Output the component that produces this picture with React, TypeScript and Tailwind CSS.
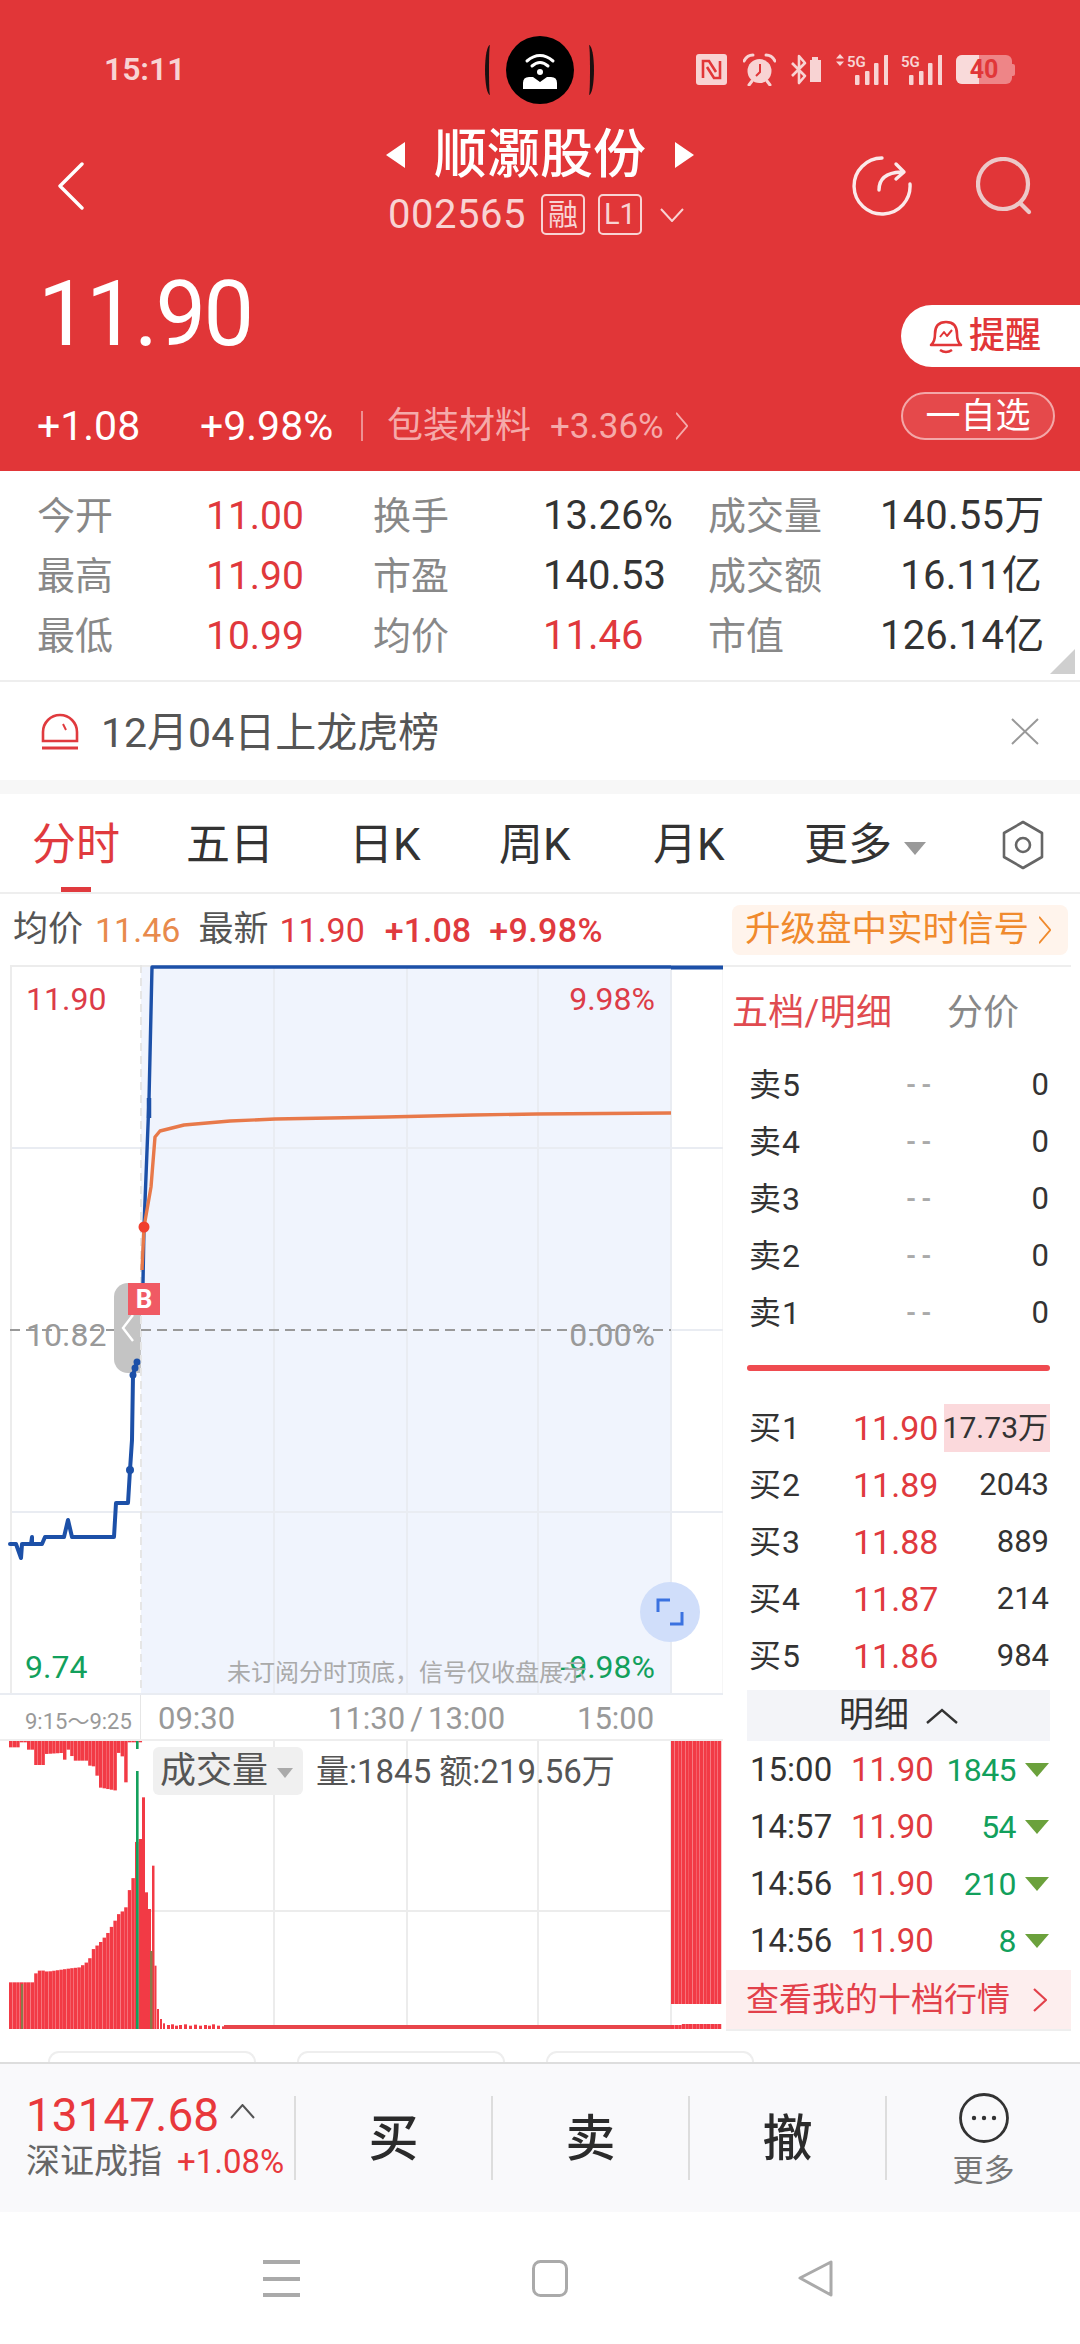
import React from "react";

function Chev({ className, d = "M4 1 L1 6 L4 11" }: { className?: string; d?: string }) {
  return (
    <svg viewBox="0 0 12 12" className={className} fill="none" stroke="currentColor" strokeWidth="1" strokeLinecap="round" strokeLinejoin="round" preserveAspectRatio="none">
      <path d={d} />
    </svg>
  );
}

function Signal({ label, arrow, xs, heights }: { label: string; arrow?: boolean; xs: number[]; heights: number[] }) {
  const w = xs[xs.length - 1] + 4;
  return (
    <svg width={w} height="32" viewBox={`0 0 ${w} 32`} fill="#f8d3d3">
      {arrow && <path d="M4 0 L8 4.5 H0 Z M4 12 L8 7.5 H0 Z" />}
      <text x={arrow ? 11 : 0} y="13" fontSize="15" fontWeight="600" fontFamily="Roboto">{label}</text>
      {xs.map((x, i) => (
        <rect key={i} x={x} y={31 - heights[i]} width="4.5" height={heights[i]} rx="1" />
      ))}
    </svg>
  );
}

function StatusIcons() {
  return (
    <div className="flex items-center w-[319px] mt-[17px]">
      <svg width="31" height="31" viewBox="0 0 31 31" className="mr-[16px]">
        <rect width="31" height="31" rx="3" fill="#f8d3d3" />
        <path d="M7 24 V7 H13 L20 18 M24 7 V24 H18 L11 13" fill="none" stroke="#e13638" strokeWidth="2.6" />
      </svg>
      <svg width="33" height="33" viewBox="0 0 33 33" className="mr-[14px]">
        <circle cx="16.5" cy="18" r="12" fill="#f8d3d3" />
        <path d="M1 8 Q4 2 10 2 M32 8 Q29 2 23 2" fill="none" stroke="#f8d3d3" strokeWidth="3" strokeLinecap="round" />
        <path d="M6 32 L9 28 M27 32 L24 28" stroke="#f8d3d3" strokeWidth="3" strokeLinecap="round" />
        <path d="M17 11 V19 L13 23" fill="none" stroke="#e13638" strokeWidth="2" />
      </svg>
      <svg width="32" height="32" viewBox="0 0 32 32" className="mr-[14px]">
        <path d="M2 9 L15 22 L9 29 V2 L15 9 L2 22" fill="none" stroke="#f8d3d3" strokeWidth="2.6" strokeLinejoin="round" />
        <path d="M20 6 H22 V3 H28 V6 H31 V28 H20 Z" fill="#f8d3d3" />
      </svg>
      <div className="mr-[13px] h-[32px]">
        <Signal label="5G" arrow xs={[19, 29, 38, 48]} heights={[10, 14, 22, 30]} />
      </div>
      <div className="mr-[14px] h-[32px]">
        <Signal label="5G" xs={[8, 18, 27, 37]} heights={[10, 14, 22, 30]} />
      </div>
      <div className="relative w-[56px] h-[29px] rounded-[6px] bg-[#ee8587] flex items-center justify-center">
        <div className="absolute left-0 top-0 bottom-0 w-[23px] bg-[#f9dada] rounded-l-[6px]" />
        <span className="relative text-[#e13638] text-[25px] font-bold leading-none">40</span>
      </div>
      <div className="w-[3px] h-[12px] bg-[#ee8587] rounded-r-[2px]" />
    </div>
  );
}

function Header() {
  return (
    <div className="h-[471px] bg-[#e13638] text-white flex flex-col shrink-0">
      <div className="h-[116px] flex items-start pt-[36px] shrink-0">
        <div className="w-[485px] pl-[104px] pt-[15px] text-[32px] leading-[36px] font-semibold text-[#f8d3d3] tracking-[-0.1px]">15:11</div>
        <div className="w-[109px] h-[68px] flex items-center justify-between">
          <div className="w-[10px] h-[50px] border-l-[4px] border-[#1a1010] rounded-l-[50%]" />
          <div className="w-[68px] h-[68px] rounded-full bg-black flex items-center justify-center">
            <svg width="44" height="44" viewBox="0 0 44 44" fill="none">
              <path d="M9 13 Q22 2 35 13 M14 18 Q22 11 30 18" stroke="#fff" strokeWidth="3" strokeLinecap="round" />
              <circle cx="22" cy="24" r="3" fill="#fff" />
              <path d="M5 41 V35 Q5 29 11 29 H15 L22 34 L29 29 H33 Q39 29 39 35 V41 Z" fill="#fff" />
            </svg>
          </div>
          <div className="w-[10px] h-[50px] border-r-[4px] border-[#1a1010] rounded-r-[50%]" />
        </div>
        <div className="pl-[102px] flex">
          <StatusIcons />
        </div>
      </div>

      <div className="h-[140px] flex items-center shrink-0">
        <div className="w-[300px] pl-[57px]">
          <svg width="28" height="48" viewBox="0 0 28 48" fill="none" stroke="#fff" strokeWidth="3.4" strokeLinecap="round" strokeLinejoin="round">
            <path d="M25 2 L3 24 L25 46" />
          </svg>
        </div>
        <div className="w-[480px] flex flex-col items-center -translate-y-[5px]">
          <div className="flex items-center h-[62px]">
            <div className="w-0 h-0 border-y-[13px] border-y-transparent border-r-[19px] border-r-white" />
            <div className="mx-[29px] text-[53px] leading-[62px] font-medium">顺灏股份</div>
            <div className="w-0 h-0 border-y-[13px] border-y-transparent border-l-[19px] border-l-white" />
          </div>
          <div className="flex items-center h-[48px] mt-[5px] text-[#f8d3d3] -translate-x-[4px]">
            <span className="text-[40px] leading-none tracking-[0.5px]">002565</span>
            <span className="ml-[15px] w-[44px] h-[41px] border-[2px] border-[#f8d3d3] rounded-[5px] flex items-center justify-center text-[30px] leading-none">融</span>
            <span className="ml-[13px] w-[44px] h-[41px] border-[2px] border-[#f8d3d3] rounded-[5px] flex items-center justify-center text-[29px] leading-none">L1</span>
            <svg width="24" height="14" viewBox="0 0 24 14" fill="none" stroke="#f8d3d3" strokeWidth="2" className="ml-[18px]">
              <path d="M1 1 L12 13 L23 1" />
            </svg>
          </div>
        </div>
        <div className="w-[300px] flex items-center pl-[72px]">
          <svg width="60" height="60" viewBox="0 0 60 60" fill="none" stroke="#fbeaea" strokeWidth="3.4" strokeLinecap="round" strokeLinejoin="round">
            <path d="M30 2 A28 28 0 1 0 58 28" />
            <path d="M27 34 Q27 17 49 16 M44 8 L52 16 L44 23" />
          </svg>
          <svg width="56" height="58" viewBox="0 0 56 58" fill="none" stroke="#ecc8c8" strokeWidth="4.2" strokeLinecap="round" className="ml-[64px]">
            <circle cx="27" cy="27" r="25" />
            <path d="M44 46 L53 55" />
          </svg>
        </div>
      </div>

      <div className="flex-1 flex justify-between">
        <div className="flex flex-col pl-[37px]">
          <div className="text-[90px] leading-[80px] mt-[19px] pl-[1px] tracking-[-2.5px]">11.90</div>
          <div className="flex items-center mt-[51px] h-[40px] text-[41px] leading-none">
            <span className="w-[163px]">+1.08</span>
            <span className="w-[161px]">+9.98%</span>
            <span className="w-[2px] h-[30px] bg-[#ee9092]" />
            <span className="ml-[24px] text-[#f5aaaa] text-[36px]">包装材料</span>
            <span className="ml-[19px] text-[#f5aaaa] text-[35px]">+3.36%</span>
            <Chev className="ml-[10px] w-[16px] h-[30px] text-[#f5aaaa]" d="M2 1 L10 6 L2 11" />
          </div>
        </div>
        <div className="flex flex-col items-end pt-[49px]">
          <div className="w-[179px] h-[62px] bg-white rounded-l-[31px] flex items-center pl-[27px] text-[#e13638] text-[36px]">
            <svg width="36" height="36" viewBox="0 0 36 36" fill="none" stroke="#e13638" strokeWidth="2.6" strokeLinejoin="round">
              <path d="M3 27 Q7 24 7 16 Q7 4 18 4 Q29 4 29 16 Q29 24 33 27 Z" />
              <path d="M12 32 Q18 36 24 32" />
              <path d="M12 19 L16 14 L19 18 L24 12" strokeWidth="2" />
            </svg>
            <span className="ml-[5px] leading-none font-medium">提醒</span>
          </div>
          <div className="w-[154px] h-[48px] mr-[25px] mt-[25px] rounded-[24px] border-[2px] border-[#f3a7a8] bg-[#e5494b] flex items-center justify-center text-[35px] leading-none">
            一自选
          </div>
        </div>
      </div>
    </div>
  );
}

const stats = [
  ["今开", "11.00", "换手", "13.26%", "成交量", "140.55万"],
  ["最高", "11.90", "市盈", "140.53", "成交额", "16.11亿"],
  ["最低", "10.99", "均价", "11.46", "市值", "126.14亿"],
];

function Stats() {
  return (
    <div className="relative h-[211px] shrink-0 border-b-[2px] border-[#eeeeee] pt-[15px] text-[38px] leading-[60px]">
      {stats.map((r, i) => (
        <div key={i} className="grid grid-cols-[206px_167px_170px_165px_172px_162px] h-[60px]">
          <span className="pl-[37px] text-[#888888]">{r[0]}</span>
          <span className="text-[#e0383c] text-[39px]">{r[1]}</span>
          <span className="text-[#888888]">{r[2]}</span>
          <span className={"text-[40px] " + (i === 2 ? "text-[#e0383c]" : "text-[#333333]")}>{r[3]}</span>
          <span className="text-[#888888]">{r[4]}</span>
          <span className="text-right text-[#333333] text-[40px] tracking-[0.2px] whitespace-nowrap">{r[5]}</span>
        </div>
      ))}
      <div className="absolute right-[5px] bottom-[6px] w-[25px] h-[25px] bg-[#cfcfcf] [clip-path:polygon(100%_0,100%_100%,0_100%)]" />
    </div>
  );
}

function AlertRow() {
  return (
    <div className="h-[98px] flex items-center shrink-0">
      <svg width="38" height="38" viewBox="0 0 38 38" fill="none" stroke="#e03a3e" strokeWidth="2.6" className="ml-[41px]">
        <path d="M2 29 V20 A17 17 0 0 1 36 20 V29 Z" />
        <path d="M22 12 L25 18" strokeWidth="2" />
        <path d="M1 36 H37" strokeWidth="3" />
      </svg>
      <span className="ml-[22px] mt-[4px] text-[41px] leading-none text-[#555555]">12月04日上龙虎榜</span>
      <svg width="28" height="27" viewBox="0 0 28 27" fill="none" stroke="#999" strokeWidth="2" className="ml-auto mr-[41px]">
        <path d="M1 1 L27 26 M27 1 L1 26" />
      </svg>
    </div>
  );
}

function Tabs() {
  return (
    <div className="relative h-[100px] shrink-0 border-b-[2px] border-[#eeeeee] bg-white flex items-center pt-[4px] text-[44px] leading-none text-[#333333]">
      <span className="ml-[32px] w-[154px] text-[#e03a3e]">分时</span>
      <span className="w-[163px]">五日</span>
      <span className="w-[150px]">日K</span>
      <span className="w-[154px]">周K</span>
      <span className="w-[151px]">月K</span>
      <span>更多</span>
      <div className="ml-[12px] mt-[6px] w-0 h-0 border-x-[11px] border-x-transparent border-t-[13px] border-t-[#999999]" />
      <svg width="44" height="50" viewBox="0 0 44 50" fill="none" stroke="#666" strokeWidth="2.6" strokeLinejoin="round" className="ml-[75px]">
        <path d="M22 2 L41 13 V37 L22 48 L3 37 V13 Z" />
        <circle cx="22" cy="25" r="7" />
      </svg>
      <div className="absolute left-[61px] bottom-0 w-[30px] h-[5px] bg-[#e03a3e]" />
    </div>
  );
}

function QuoteRow() {
  return (
    <div className="h-[65px] flex items-center shrink-0 pt-[6px] text-[34px] leading-none">
      <span className="ml-[13px] text-[35px] text-[#555555]">均价</span>
      <span className="ml-[12px] text-[#e88a4c]">11.46</span>
      <span className="ml-[18px] text-[35px] text-[#555555]">最新</span>
      <span className="ml-[11px] text-[#e03a3e]">11.90</span>
      <span className="ml-[20px] text-[#e03a3e] font-medium">+1.08</span>
      <span className="ml-[18px] text-[#e03a3e] font-medium tracking-[0.4px]">+9.98%</span>
      <div className="ml-auto mr-[12px] w-[336px] h-[50px] rounded-[8px] bg-[#fff4ec] flex items-center pl-[13px] text-[#f08a2d] text-[35.5px]">
        升级盘中实时信号
        <Chev className="ml-[8px] w-[16px] h-[30px]" d="M2 1 L10 6 L2 11" />
      </div>
    </div>
  );
}

const blueLow = "10,1544 16,1544 21,1558 22,1544 31,1544 32,1537 32,1544 42,1544 45,1537 64,1537 68,1520 72,1537 114,1537 116,1503 128,1503 130,1470 132,1440 133,1375 137,1362";
const blueHigh = "143,1283 144,1227 149,1100 152,967 671,967";
const orangePts = "142,1270 144,1227 151,1187 155,1137 160,1131 184,1125 230,1121 275,1119 386,1117 473,1115 537,1114 671,1113";
const shift = (s: string, dy: number) =>
  s.split(" ").map((p) => { const [x, y] = p.split(","); return `${x},${+y - dy}`; }).join(" ");

function PriceChart() {
  const T = 965;
  return (
    <div className="relative h-[728px] shrink-0 text-[32px] leading-none">
      <div className="absolute left-[114px] top-[318px] w-[27px] h-[90px] rounded-l-[14px] bg-[#c4c4c4] flex items-center justify-center">
        <svg width="14" height="28" viewBox="0 0 14 28" fill="none" stroke="#fff" strokeWidth="2.4"><path d="M12 1 L2 14 L12 27" /></svg>
      </div>
      <svg className="absolute left-0 top-0" width="723" height="728" viewBox="0 0 723 728" fill="none">
        <rect x="141" y="2" width="530" height="726" fill="#f0f4fd" />
        <g stroke="#e9ecf2" strokeWidth="2">
          <path d="M274 2 V728 M407 2 V728 M538 2 V728 M671 2 V728" />
          <path d="M10 183 H723 M10 547 H723 M671 365 H723" />
        </g>
        <path d="M11 0 V728" stroke="#ececec" strokeWidth="2" />
        <path d="M723 0 V728" stroke="#ececec" strokeWidth="1" />
        <path d="M10 1 H723" stroke="#ececec" strokeWidth="2" />
        <path d="M141 0 V728" stroke="#e6e6e6" strokeWidth="2" strokeDasharray="8 5" />
        <path d="M10 365 H114 M141 365 H671" stroke="#999" strokeWidth="2" strokeDasharray="10 6" />
        <polyline points={shift(blueLow, T)} stroke="#1c50a8" strokeWidth="4" strokeLinejoin="round" strokeLinecap="round" />
        <polyline points={shift(blueHigh, T)} stroke="#1c50a8" strokeWidth="3.4" strokeLinejoin="round" />
        <path d="M671 2.5 H723" stroke="#1c50a8" strokeWidth="4" />
        <polyline points={shift(orangePts, T)} stroke="#e8794a" strokeWidth="3.4" strokeLinejoin="round" />
        <path d="M149 133 V153" stroke="#1c50a8" strokeWidth="4.5" />
        <circle cx="130" cy="505" r="4" fill="#1c50a8" />
        <circle cx="133" cy="410" r="3.5" fill="#1c50a8" />
        <circle cx="135" cy="403" r="3.5" fill="#1c50a8" />
        <circle cx="137" cy="397" r="3.5" fill="#1c50a8" />
        <circle cx="144" cy="262" r="5.5" fill="#f0402f" />
      </svg>
      <span className="absolute left-[26px] top-[18px] text-[#dc3c48]">11.90</span>
      <span className="absolute right-[68px] top-[18px] text-[#dc3c48]">9.98%</span>
      <span className="absolute left-[26px] top-[354px] text-[#999999]">10.82</span>
      <span className="absolute right-[68px] top-[354px] text-[#999999]">0.00%</span>
      <span className="absolute left-[25px] top-[686px] text-[#12a05c]">9.74</span>
      <span className="absolute right-[68px] top-[686px] text-[#12a05c]">-9.98%</span>
      <span className="absolute left-[227px] top-[696px] text-[24px] text-[#aaaaaa]">未订阅分时顶底，信号仅收盘展示</span>
      <div className="absolute left-[128px] top-[318px] w-[32px] h-[32px] bg-[#f05a64] text-white text-[26px] font-bold flex items-center justify-center">B</div>
      <div className="absolute left-[640px] top-[617px] w-[60px] h-[60px] rounded-full bg-[#d0defa] flex items-center justify-center">
        <svg width="28" height="28" viewBox="0 0 28 28" fill="none" stroke="#3b72e0" strokeWidth="3"><path d="M14 2 H2 V14 M26 14 V26 H14" /></svg>
      </div>
    </div>
  );
}

function AxisRow() {
  return (
    <div className="relative h-[48px] shrink-0 border-b-[2px] border-t-[2px] border-t-[#e9ecf2] border-[#eeeeee] flex items-center pt-[3px] text-[#999999] text-[31px] leading-none w-[723px]">
      <span className="ml-[25px] w-[133px] text-[22px] pt-[6px] whitespace-nowrap">9:15～9:25</span>
      <span className="w-[170px]">09:30</span>
      <span className="w-[249px] whitespace-nowrap">11:30<span className="mx-[5px]">/</span>13:00</span>
      <span>15:00</span>
      <div className="absolute left-[140px] top-0 bottom-0 w-[1px] bg-[#e6e6e6]" />
    </div>
  );
}

const interp = (p: number[][], x: number) => {
  if (x <= p[0][0]) return p[0][1];
  for (let i = 1; i < p.length; i++) {
    if (x <= p[i][0]) {
      const [a, b] = [p[i - 1], p[i]];
      return a[1] + ((b[1] - a[1]) * (x - a[0])) / (b[0] - a[0]);
    }
  }
  return p[p.length - 1][1];
};
const hang = [[20, 205], [38, 205], [39, 190], [55, 190], [56, 212], [68, 212], [70, 258], [95, 258], [96, 225], [130, 222], [131, 242], [140, 242], [141, 212], [150, 212], [155, 245], [190, 245], [192, 260], [200, 262], [202, 290], [210, 290], [212, 325], [250, 335], [251, 220], [262, 225], [270, 310], [275, 310], [276, 190], [300, 190]];
const lower = [[20, 910], [70, 910], [75, 880], [85, 873], [100, 878], [150, 868], [170, 865], [190, 845], [200, 810], [215, 790], [230, 765], [245, 730], [255, 705], [270, 690], [275, 640], [285, 620], [290, 525], [295, 480], [303, 480]];
const Y = (z: number) => z / 3 + 1680 - 1742;
const BAR = "#f23a45";

function VolumeChart() {
  const bars: React.ReactNode[] = [];
  for (let x = 9; x < 139; x += 3.6) {
    const z = x * 2.178;
    bars.push(<rect key={"h" + x} x={x} y={0} width={3.45} height={Y(interp(hang, z))} fill={BAR} />);
    bars.push(<rect key={"l" + x} x={x} y={Y(interp(lower, z))} width={3.45} height={288 - Y(interp(lower, z))} fill={BAR} />);
  }
  const mid = [[140.5, 870, 2.5], [142, 355, 3], [145, 640, 3], [148, 690, 3], [152, 560, 2.5], [154.5, 860, 2], [157, 990, 2], [160, 1020, 2], [163, 1033, 2], [167, 1038, 3], [171, 1036, 3], [175, 1040, 3], [179, 1038, 3], [184, 1036, 3], [189, 1040, 3], [194, 1037, 3], [199, 1040, 3], [204, 1038, 3], [208, 1040, 3], [212, 1036, 3], [217, 1040, 3], [222, 1042, 3]];
  return (
    <div className="relative h-[289px] shrink-0 text-[33px] leading-none text-[#555555]">
      <svg className="absolute left-0 top-0" width="723" height="288" viewBox="0 0 723 288" fill="none">
        <g stroke="#ececec" strokeWidth="2">
          <path d="M274 0 V288 M407 0 V288 M538 0 V288 M671 0 V288 M141 170 H671" />
        </g>
        {bars}
        {mid.map((m, i) => (
          <rect key={i} x={m[0]} y={Y(m[1])} width={m[2]} height={288 - Y(m[1])} fill={BAR} />
        ))}
        <rect x="224" y="284" width="447" height="4" fill="#e8454b" />
        <rect x="136" y="30" width="2.6" height="258" fill="#13a05c" />
        <rect x="136" y="0" width="2.6" height="8" fill="#13a05c" />
        <rect x="21" y="243" width="2" height="45" fill="#8a7a4a" />
        <rect x="150" y="210" width="2.5" height="78" fill="#8a7a4a" />
        {Array.from({ length: 14 }).map((_, i) => (
          <g key={i}>
            <rect x={671 + i * 3.6} y="0" width="3.45" height="263" fill={BAR} />
            <rect x={671 + i * 3.6} y={i < 3 ? 284 : 283} width="3.45" height={i < 3 ? 4 : 5} fill={BAR} />
          </g>
        ))}
      </svg>
      <div className="absolute left-[153px] top-[6px] w-[150px] h-[48px] rounded-[6px] bg-[#f0f0f0] flex items-center pl-[7px] text-[36px]">
        成交量
        <div className="ml-[9px] mt-[3px] w-0 h-0 border-x-[8px] border-x-transparent border-t-[10px] border-t-[#aaaaaa]" />
      </div>
      <span className="absolute left-[316px] top-[14px] whitespace-nowrap">量:1845 额:219.56万</span>
    </div>
  );
}

function BookRow({ label, price, qty, hl }: { label: string; price: string; qty: string; hl?: boolean }) {
  return (
    <div className="h-[57px] flex items-center pl-[26px] text-[31px] leading-none text-[#333333]">
      <span className="w-[104px] tracking-[1px] text-[32px]">{label}</span>
      {price === "--" ? (
        <span className="w-[84px] pl-[53px] text-[#aaaaaa] font-bold tracking-[5px] text-[26px] whitespace-nowrap">--</span>
      ) : (
        <span className="w-[84px] text-[34px] text-[#e03a3e] whitespace-nowrap">{price}</span>
      )}
      {hl ? (
        <span className="ml-[7px] w-[106px] h-[48px] bg-[#fbd9dc] flex items-center justify-end pr-[2px] text-[30px] whitespace-nowrap">{qty}</span>
      ) : (
        <span className="w-[110px] ml-auto mr-[22px] text-right">{qty}</span>
      )}
    </div>
  );
}

function Tick({ t, q }: { t: string; q: string }) {
  return (
    <div className="h-[57px] flex items-center pl-[27px] text-[33px] leading-none">
      <span className="w-[101px] text-[#333333]">{t}</span>
      <span className="w-[84px] text-[#e03a3e]">11.90</span>
      <span className="w-[81px] text-right text-[#12a05c] text-[32px] tracking-[-0.6px]">{q}</span>
      <div className="ml-[9px] w-0 h-0 border-x-[12.5px] border-x-transparent border-t-[14px] border-t-[#6ba13c]" />
    </div>
  );
}

function SidePanel() {
  return (
    <div className="w-[348px] flex flex-col h-[1067px] border-t-[2px] border-[#eeeeee]">
      <div className="h-[88px] flex items-center pl-[9px] pt-[3px] text-[36px] leading-none shrink-0">
        <span className="text-[#e04b50] w-[215px] tracking-[0.3px]">五档/明细</span>
        <span className="text-[#888888]">分价</span>
      </div>
      <div className="shrink-0 mt-[1px]">
        <BookRow label="卖5" price="--" qty="0" />
        <BookRow label="卖4" price="--" qty="0" />
        <BookRow label="卖3" price="--" qty="0" />
        <BookRow label="卖2" price="--" qty="0" />
        <BookRow label="卖1" price="--" qty="0" />
      </div>
      <div className="ml-[24px] w-[303px] h-[6px] rounded-full bg-[#ef4b50] mt-[24px] mb-[28px] shrink-0" />
      <BookRow label="买1" price="11.90" qty="17.73万" hl />
      <BookRow label="买2" price="11.89" qty="2043" />
      <BookRow label="买3" price="11.88" qty="889" />
      <BookRow label="买4" price="11.87" qty="214" />
      <BookRow label="买5" price="11.86" qty="984" />
      <div className="ml-[24px] mt-[6px] w-[303px] h-[51px] bg-[#f3f4f8] flex items-center justify-center text-[35px] leading-none text-[#333333] shrink-0">
        明细
        <svg width="32" height="16" viewBox="0 0 32 16" fill="none" stroke="#333" strokeWidth="2.4" className="ml-[17px]"><path d="M1 15 L16 2 L31 15" /></svg>
      </div>
      <Tick t="15:00" q="1845" />
      <Tick t="14:57" q="54" />
      <Tick t="14:56" q="210" />
      <Tick t="14:56" q="8" />
      <div className="ml-[3px] h-[61px] mt-[1px] bg-[#fdeeee] flex items-center pl-[20px] text-[#e2404a] text-[33px] leading-none shrink-0 whitespace-nowrap border-b-[2px] border-[#eeeeee]">
        查看我的十档行情
        <svg width="14" height="24" viewBox="0 0 14 24" fill="none" stroke="#e2404a" strokeWidth="2.2" className="ml-[23px]"><path d="M1 1 L13 12 L1 23" /></svg>
      </div>
    </div>
  );
}

function Footer() {
  return (
    <div className="h-[150px] bg-[#f9f9fb] border-t-[2px] border-[#dddddd] shrink-0 flex items-center">
      <div className="w-[294px] h-[84px] flex flex-col pl-[26px] shrink-0">
        <div className="flex items-center h-[42px] -mt-[2px]">
          <span className="text-[46px] leading-none text-[#e8383c]">13147.68</span>
          <svg width="25" height="15" viewBox="0 0 25 15" fill="none" stroke="#555" strokeWidth="2" className="ml-[11px] -mt-[8px]"><path d="M1 14 L12.5 1 L24 14" /></svg>
        </div>
        <div className="flex items-center h-[42px] mt-[6px]">
          <span className="text-[34px] leading-none text-[#666666]">深证成指</span>
          <span className="ml-[15px] text-[33px] leading-none text-[#e8383c] whitespace-nowrap">+1.08%</span>
        </div>
      </div>
      {["买", "卖", "撤"].map((c) => (
        <div key={c} className="w-[197px] h-[84px] pt-[2px] border-l-[2px] border-[#dddddd] flex items-center justify-center text-[50px] font-medium leading-none text-[#2b2b2b] shrink-0">{c}</div>
      ))}
      <div className="flex-1 h-[84px] border-l-[2px] border-[#dddddd] flex flex-col items-center text-[31px] leading-none text-[#777777]">
        <svg width="50" height="50" viewBox="0 0 50 50" fill="none" stroke="#333" strokeWidth="2.8" className="-mt-[3px] shrink-0">
          <circle cx="25" cy="25" r="23.5" />
          <circle cx="15" cy="25" r="2.2" fill="#333" stroke="none" />
          <circle cx="25" cy="25" r="2.2" fill="#333" stroke="none" />
          <circle cx="35" cy="25" r="2.2" fill="#333" stroke="none" />
        </svg>
        <span className="mt-[12px]">更多</span>
      </div>
    </div>
  );
}

function NavBar() {
  return (
    <div className="flex-1 bg-white flex items-start pt-[48px]">
      <svg width="38" height="38" viewBox="0 0 38 38" fill="#aaa" className="ml-[263px]">
        <rect y="0" width="37" height="4" />
        <rect y="17" width="37" height="4" />
        <rect y="33" width="37" height="4" />
      </svg>
      <svg width="36" height="37" viewBox="0 0 36 37" fill="none" stroke="#aaa" strokeWidth="3" className="ml-[231px]">
        <rect x="1.5" y="1.5" width="33" height="34" rx="7" />
      </svg>
      <svg width="36" height="37" viewBox="0 0 36 37" fill="none" stroke="#aaa" strokeWidth="3" strokeLinejoin="round" className="ml-[230px]">
        <path d="M33 2 V35 L2 18 Z" />
      </svg>
    </div>
  );
}

export default function App() {
  return (
    <div className="w-[1080px] h-[2344px] bg-white overflow-hidden flex flex-col font-['Roboto','Noto_Sans_CJK_SC',sans-serif]">
      <Header />
      <Stats />
      <AlertRow />
      <div className="h-[14px] bg-[#f7f7f7] shrink-0" />
      <Tabs />
      <QuoteRow />
      <div className="h-[6px] shrink-0" />
      <div className="flex shrink-0 h-[1067px]">
        <div className="w-[723px] flex flex-col shrink-0">
          <PriceChart />
          <AxisRow />
          <VolumeChart />
        </div>
        <SidePanel />
      </div>
      <div className="h-[30px] shrink-0 flex items-end pl-[48px] gap-[41px]">
        <div className="w-[208px] h-[11px] rounded-t-[22px] border-[2px] border-b-0 border-[#eeeeee]" />
        <div className="w-[208px] h-[11px] rounded-t-[22px] border-[2px] border-b-0 border-[#eeeeee]" />
        <div className="w-[208px] h-[11px] rounded-t-[22px] border-[2px] border-b-0 border-[#eeeeee]" />
      </div>
      <Footer />
      <NavBar />
    </div>
  );
}
